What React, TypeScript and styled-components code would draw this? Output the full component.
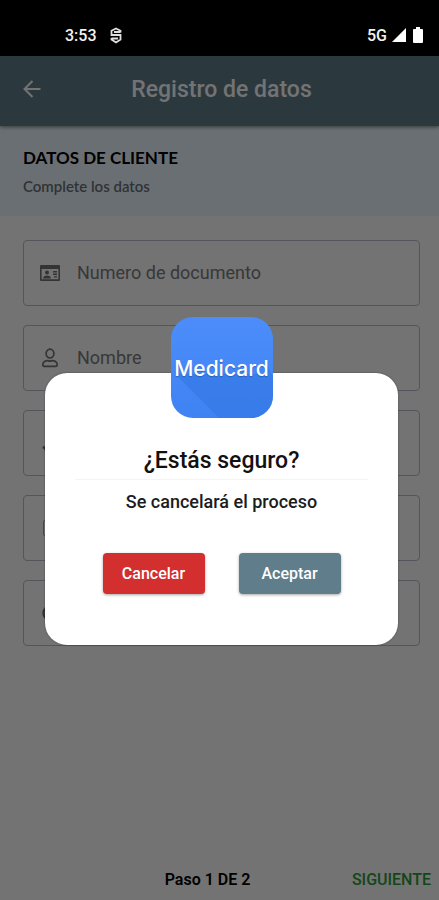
import React from "react";
import styled, { createGlobalStyle } from "styled-components";

const GlobalStyle = createGlobalStyle`
  *, *::before, *::after { box-sizing: border-box; }
  body { margin: 0; background: #fff; font-family: Roboto, sans-serif; }
  h1, h2, p { margin: 0; }
`;

const Screen = styled.div`
  position: relative;
  display: flex;
  flex-direction: column;
  min-height: 100vh;
  background: #fff;
`;

const StatusBar = styled.header`
  position: relative;
  z-index: 3;
  display: flex;
  justify-content: space-between;
  align-items: center;
  height: 56px;
  padding: 14px 16px 0 65px;
  background: #000;
  color: #f2f2f2;
  font-size: 16px;
  font-weight: 500;
`;

const StatusGroup = styled.div<{ $gap: number }>`
  display: flex;
  align-items: center;
  gap: ${(p) => p.$gap}px;
`;

const AppBar = styled.div`
  display: grid;
  grid-template-columns: 64px 1fr 60px;
  align-items: center;
  height: 70px;
  padding-bottom: 3px;
  background: #607d8b;
  box-shadow: 0 1px 4px rgba(0, 0, 0, 0.5);
  z-index: 1;
`;

const BackButton = styled.button`
  display: flex;
  justify-content: center;
  padding: 0;
  border: 0;
  background: none;
  color: #fff;
`;

const Title = styled.h1`
  color: #fff;
  font-size: 23px;
  font-weight: 500;
  line-height: 28px;
  text-align: center;
`;

const Intro = styled.section`
  height: 90px;
  padding: 20px 23px;
  background: #ebf7ff;
  font-family: Lato, sans-serif;
`;

const IntroTitle = styled.h2`
  color: #000;
  font-size: 17px;
  font-weight: 700;
  line-height: 24px;
`;

const IntroText = styled.p`
  padding-top: 4px;
  color: #6c7076;
  font-size: 15px;
  font-weight: 600;
  line-height: 24px;
`;

const Form = styled.form`
  display: flex;
  flex: 1;
  flex-direction: column;
  gap: 19px;
  padding: 24px 19px 24px 23px;
`;

const Field = styled.label`
  display: flex;
  align-items: center;
  gap: 16px;
  height: 66px;
  padding: 0 15px;
  border: 1px solid #bcbdcc;
  border-radius: 4px;
  color: #747474;
`;

const FieldInput = styled.input`
  flex: 1;
  min-width: 0;
  padding: 0;
  border: 0;
  outline: 0;
  background: none;
  color: #222;
  font-family: Roboto, sans-serif;
  font-size: 18px;
  line-height: 24px;
  &::placeholder { color: #7c7c7c; opacity: 1; }
`;

const Footer = styled.footer`
  display: grid;
  grid-template-columns: 1fr auto 1fr;
  align-items: center;
  height: 42px;
  padding-right: 8px;
`;

const Step = styled.span`
  grid-column: 2;
  padding-right: 16px;
  color: #000;
  font-size: 16px;
  font-weight: 600;
`;

const NextButton = styled.button`
  justify-self: end;
  padding: 0;
  border: 0;
  background: none;
  color: #2f9b3a;
  font-family: Roboto, sans-serif;
  font-size: 16px;
  font-weight: 500;
`;

const Scrim = styled.div`
  position: absolute;
  inset: 56px 0 0;
  z-index: 2;
  display: flex;
  align-items: center;
  justify-content: center;
  padding: 6px 41px 0 45px;
  background: rgba(0, 0, 0, 0.55);
`;

const Dialog = styled.div`
  display: flex;
  flex-direction: column;
  align-items: center;
  width: 100%;
  max-width: 400px;
  margin-top: 56px;
  padding: 0 30px 51px;
  border-radius: 22px;
  background: #fff;
  box-shadow: 0 0 2px rgba(0, 0, 0, 0.4);
`;

const Logo = styled.div`
  display: grid;
  place-items: center;
  width: 102px;
  height: 101px;
  margin-top: -56px;
  border-radius: 22px;
  overflow: hidden;
  background: linear-gradient(#4c8dfb, #3f82f2);
`;

const LogoShade = styled.svg`
  grid-area: 1 / 1;
  width: 102px;
  height: 101px;
`;

const LogoName = styled.span`
  grid-area: 1 / 1;
  z-index: 1;
  padding-top: 2px;
  color: #fff;
  font-family: Inter, sans-serif;
  font-size: 21px;
  font-weight: 500;
  line-height: 24px;
  text-shadow: 0 1px 1px rgba(20, 50, 110, 0.4);
`;

const Question = styled.h2`
  width: 100%;
  margin-top: 27px;
  padding-bottom: 2px;
  border-bottom: 1px solid #f4f4f4;
  color: #111;
  font-size: 23px;
  font-weight: 500;
  line-height: 32px;
  text-align: center;
`;

const Message = styled.p`
  padding-top: 10px;
  color: #1c1c1c;
  font-size: 18px;
  font-weight: 500;
  line-height: 24px;
`;

const Actions = styled.div`
  display: flex;
  gap: 34px;
  padding-top: 39px;
`;

const ActionButton = styled.button<{ $color: string }>`
  width: 102px;
  height: 41px;
  padding: 0;
  border: 0;
  border-radius: 4px;
  background: ${(p) => p.$color};
  box-shadow: 0 1px 3px rgba(0, 0, 0, 0.35);
  color: #fff;
  font-family: Roboto, sans-serif;
  font-size: 16px;
  font-weight: 500;
`;

const IdCardIcon = () => (
  <svg width="22" height="22" viewBox="0 0 22 22" fill="currentColor">
    <path fillRule="evenodd" d="M2 3h18a1 1 0 0 1 1 1v14a1 1 0 0 1-1 1H2a1 1 0 0 1-1-1V4a1 1 0 0 1 1-1zm.6 4v10.3h16.8V7z" />
    <circle cx="8" cy="10.5" r="2" />
    <path d="M4 16.4c0-2 2-3 4-3s4 1 4 3zM14 9h4v1.4h-4zM14 11.6h4V13h-4zM15 14.2h3v1.4h-3z" />
  </svg>
);

const PersonIcon = () => (
  <svg width="22" height="22" viewBox="0 0 22 22" fill="none" stroke="currentColor" strokeWidth="1.7">
    <ellipse cx="11" cy="6.6" rx="3.9" ry="4.4" />
    <path d="M3.8 18c0-3.4 3-4.4 4.8-4.4.9 0 1.3.6 2.4.6s1.5-.6 2.4-.6c1.8 0 4.8 1 4.8 4.4 0 .8-.5 1.3-1.3 1.3H5.1c-.8 0-1.3-.5-1.3-1.3z" />
  </svg>
);

const PencilIcon = () => (
  <svg width="22" height="22" viewBox="0 0 22 22" fill="currentColor">
    <path d="M5 18.5l1-5 8-9 4 4-8 9z" />
    <circle cx="5" cy="15.5" r="1.5" />
  </svg>
);

const PhoneIcon = () => (
  <svg width="22" height="22" viewBox="0 0 22 22" fill="none" stroke="#a0a0a0" strokeWidth="1">
    <rect x="4.5" y="3" width="12" height="16" rx="2" />
    <path d="M9 17h4" />
  </svg>
);

const AtIcon = () => (
  <svg width="22" height="22" viewBox="0 0 22 22" fill="none" stroke="currentColor" strokeWidth="2.5">
    <circle cx="11" cy="11" r="6.5" />
    <circle cx="11" cy="11" r="2" />
  </svg>
);

const fields = [
  { label: "Numero de documento", placeholder: "Numero de documento", Icon: IdCardIcon },
  { label: "Nombre", placeholder: "Nombre", Icon: PersonIcon },
  { label: "Apellido", Icon: PencilIcon },
  { label: "Celular", Icon: PhoneIcon },
  { label: "Correo", Icon: AtIcon },
];

export default function App() {
  return (
    <>
      <GlobalStyle />
      <Screen>
        <StatusBar>
          <StatusGroup $gap={13}>
            <span>3:53</span>
            <svg width="12" height="17" viewBox="0 0 12 17" fill="none" stroke="#e0e0e0" strokeWidth="1.8">
              <path d="M10.5 5.500V3.800L6 1.500 1.500 3.800V8h9v4.500L6 15.500l-4.500-3V11M4 5h6.500M1.500 11.500H8" />
            </svg>
          </StatusGroup>
          <StatusGroup $gap={5}>
            <span>5G</span>
            <StatusGroup $gap={7}>
              <svg width="14" height="14" viewBox="0 0 14 14"><path d="M14 0v14H0z" fill="#fff" /></svg>
              <svg width="10" height="16" viewBox="0 0 10 16" fill="#fff">
                <path d="M3 0h4v2h2q1 0 1 1v12q0 1-1 1H1q-1 0-1-1V3q0-1 1-1h2z" />
              </svg>
            </StatusGroup>
          </StatusGroup>
        </StatusBar>
        <AppBar>
          <BackButton type="button" aria-label="Volver">
            <svg width="20" height="20" viewBox="0 0 20 20" fill="none" stroke="currentColor" strokeWidth="2">
              <path d="M18.500 9H2.500M10.500 1L2.500 9l8 8" />
            </svg>
          </BackButton>
          <Title>Registro de datos</Title>
        </AppBar>
        <Intro>
          <IntroTitle>DATOS DE CLIENTE</IntroTitle>
          <IntroText>Complete los datos</IntroText>
        </Intro>
        <Form>
          {fields.map(({ label, placeholder, Icon }) => (
            <Field key={label}>
              <Icon />
              <FieldInput type="text" aria-label={label} placeholder={placeholder} />
            </Field>
          ))}
        </Form>
        <Footer>
          <Step>Paso 1 DE 2</Step>
          <NextButton type="button">SIGUIENTE</NextButton>
        </Footer>
        <Scrim>
          <Dialog role="dialog" aria-modal="true" aria-labelledby="question">
            <Logo>
              <LogoShade viewBox="0 0 102 101">
                <path d="M4 57L48 101H102V60L94 44V57z" fill="#3478e5" opacity=".65" />
              </LogoShade>
              <LogoName>Medicard</LogoName>
            </Logo>
            <Question id="question">¿Estás seguro?</Question>
            <Message>Se cancelará el proceso</Message>
            <Actions>
              <ActionButton type="button" $color="#d32f2f">Cancelar</ActionButton>
              <ActionButton type="button" $color="#607d8b">Aceptar</ActionButton>
            </Actions>
          </Dialog>
        </Scrim>
      </Screen>
    </>
  );
}
